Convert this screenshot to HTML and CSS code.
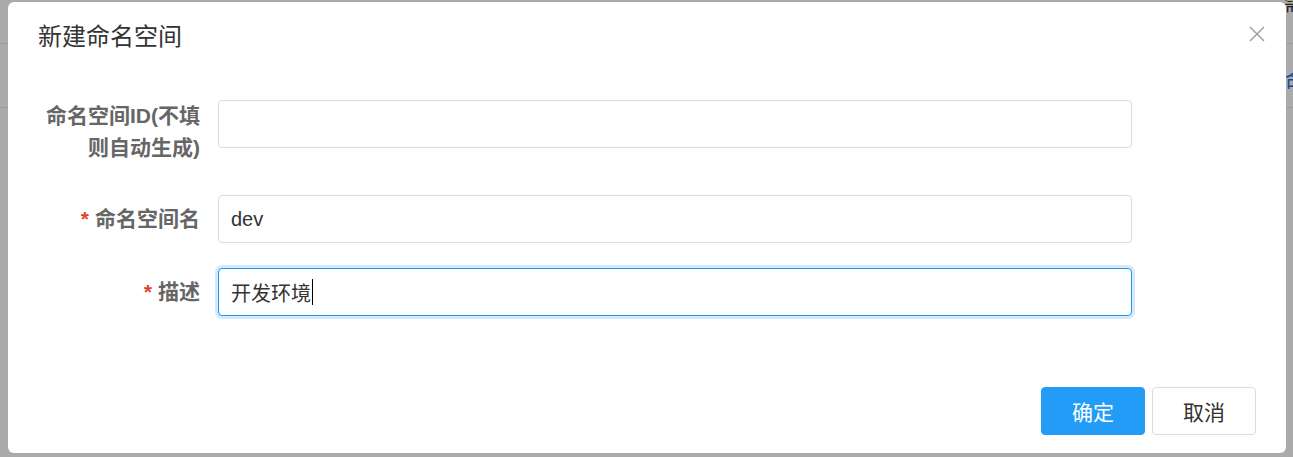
FILE: index.html
```html
<!DOCTYPE html>
<html lang="zh-CN">
<head>
<meta charset="utf-8">
<title>新建命名空间</title>
<link rel="stylesheet" href="styles.css">
</head>
<body>
<div class="page">
  <div class="page-top"><span class="page-top-text">需</span></div>
  <div class="page-bar"><span class="page-link">命</span></div>
</div>
<div class="mask"></div>
<div class="modal">
  <div class="modal-header">
    <h2 class="modal-title">新建命名空间</h2>
    <button class="modal-close" type="button" aria-label="关闭">
      <svg width="16" height="16" viewBox="0 0 16 16"><path d="M1 1L15 15M15 1L1 15" stroke="#9a9a9a" stroke-width="1.4" fill="none"/></svg>
    </button>
  </div>
  <form class="form">
    <div class="row row-first">
      <label class="label">命名空间ID(不填则自动生成)</label>
      <input class="input" type="text" value="">
    </div>
    <div class="row">
      <label class="label"><span class="req">*</span>命名空间名</label>
      <input class="input" type="text" value="dev">
    </div>
    <div class="row">
      <label class="label"><span class="req">*</span>描述</label>
      <div class="input input-focus">开发环境<span class="caret"></span></div>
    </div>
  </form>
  <div class="modal-footer">
    <button class="btn btn-primary" type="button">确定</button>
    <button class="btn btn-default" type="button">取消</button>
  </div>
</div>
</body>
</html>
```
FILE: styles.css
```css
html, body {
  margin: 0;
  padding: 0;
}
body {
  width: 1293px;
  height: 457px;
  overflow: hidden;
  position: relative;
  background: #fff;
  font-family: "Liberation Sans", "Noto Sans CJK SC", sans-serif;
}
.page {
  width: 1293px;
  overflow: hidden;
}
.page-top {
  height: 43px;
  border-bottom: 1px solid #eaeaea;
  position: relative;
}
.page-top-text {
  position: absolute;
  left: 1284px;
  top: -12px;
  font-size: 20px;
  color: #333;
}
.page-bar {
  height: 63px;
  border-bottom: 1px solid #eaeaea;
  position: relative;
}
.page-link {
  position: absolute;
  left: 1285px;
  top: 18px;
  font-size: 22px;
  color: #2a6fe0;
  white-space: nowrap;
}
.mask {
  position: absolute;
  inset: 0;
  background: rgba(0, 0, 0, 0.33);
}
.modal {
  position: absolute;
  left: 8px;
  top: 2px;
  width: 1278px;
  height: 451px;
  background: #fff;
  border-radius: 6px;
  display: flex;
  flex-direction: column;
  box-sizing: border-box;
}
.modal-header {
  display: flex;
  justify-content: space-between;
  align-items: flex-start;
  padding: 20px 21px 0 30px;
}
.modal-title {
  margin: 0;
  font-size: 24px;
  line-height: 30px;
  font-weight: normal;
  color: #333;
}
.modal-close {
  border: 0;
  background: none;
  padding: 0;
  margin-top: 4px;
  width: 16px;
  height: 16px;
  display: flex;
}
.form {
  padding: 48px 0 0 30px;
  margin: 0;
}
.row {
  display: flex;
  align-items: flex-start;
  gap: 18px;
  margin-bottom: 25px;
}
.row-first .label {
  padding-bottom: 6px;
}
.label {
  width: 162px;
  min-height: 48px;
  display: flex;
  align-items: center;
  justify-content: flex-end;
  text-align: right;
  font-size: 21px;
  line-height: 32px;
  font-weight: bold;
  color: #666;
  box-sizing: border-box;
  flex: none;
}
.req {
  color: #e2402b;
  margin-right: 6px;
  font-weight: bold;
}
.input {
  width: 914px;
  height: 48px;
  box-sizing: border-box;
  border: 1px solid #dcdcdc;
  border-radius: 4px;
  padding: 0 12px;
  font-size: 20px;
  font-family: "Liberation Sans", "Noto Sans CJK SC", sans-serif;
  color: #333;
  outline: none;
  background: #fff;
  flex: none;
}
.input-focus {
  border-color: #2196f3;
  box-shadow: 0 0 0 3px rgba(33, 150, 243, 0.2);
  display: flex;
  align-items: center;
}
.caret {
  display: inline-block;
  width: 1px;
  height: 26px;
  background: #000;
  margin-left: 1px;
}
.modal-footer {
  margin-top: auto;
  display: flex;
  justify-content: flex-end;
  gap: 7px;
  padding: 0 30px 18px 0;
}
.btn {
  width: 104px;
  height: 48px;
  border-radius: 4px;
  font-size: 21px;
  font-family: "Liberation Sans", "Noto Sans CJK SC", sans-serif;
  box-sizing: border-box;
  cursor: pointer;
}
.btn-primary {
  background: #229cf7;
  border: 1px solid #229cf7;
  color: #fff;
}
.btn-default {
  background: #fff;
  border: 1px solid #dcdcdc;
  color: #333;
}
```
